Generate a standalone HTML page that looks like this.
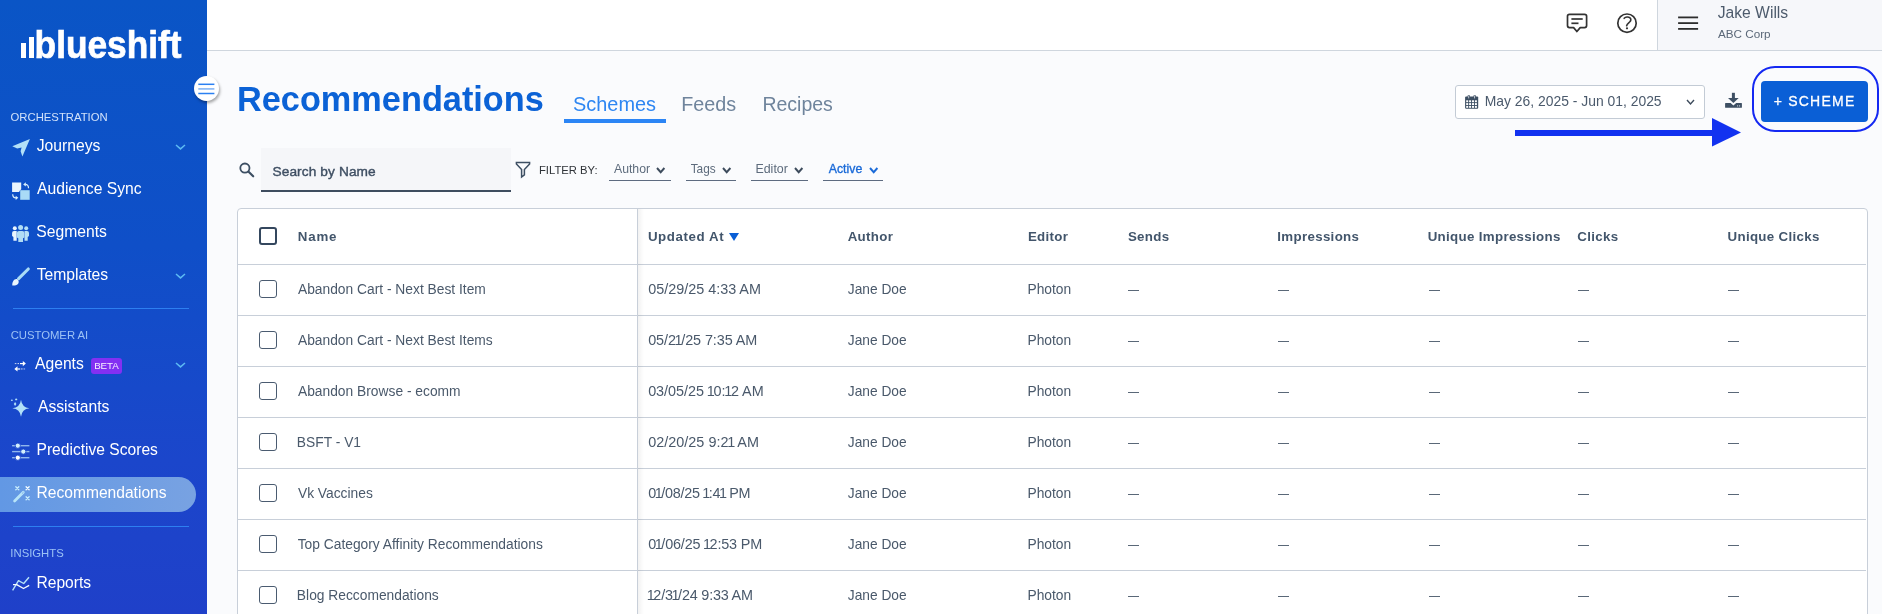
<!DOCTYPE html>
<html><head><meta charset="utf-8"><title>Recommendations</title>
<style>
html,body{margin:0;padding:0;}
body{width:1882px;height:614px;overflow:hidden;position:relative;will-change:transform;background:#fafbfd;font-family:"Liberation Sans",sans-serif;}
.a{position:absolute;}
.t{position:absolute;white-space:nowrap;}
svg{overflow:visible;}
</style></head><body>
<div class="a" style="left:0;top:0;width:207px;height:614px;background:linear-gradient(180deg,#0a55c6 0%,#0f4fc8 40%,#1b46cb 75%,#1f40c9 100%);"></div>
<div class="a" style="left:21px;top:43px;width:5px;height:15px;background:#fff;"></div>
<div class="a" style="left:29px;top:37px;width:5px;height:21px;background:#fff;"></div>
<svg class="a" style="left:34px;top:22px" width="152" height="42"><text x="0.6" y="36" font-family="Liberation Sans" font-weight="700" font-size="38" fill="#fff" stroke="#fff" stroke-width="0.7" textLength="147" lengthAdjust="spacingAndGlyphs">blueshift</text></svg>
<div class="t " style="left:10.56px;top:111.63px;font-size:11.3px;line-height:11.3px;color:#d2e2fa;">ORCHESTRATION</div>
<div class="t " style="left:36.75px;top:138.01px;font-size:15.7px;line-height:15.7px;color:#ffffff;">Journeys</div>
<div class="t " style="left:36.97px;top:180.81px;font-size:15.7px;line-height:15.7px;color:#ffffff;">Audience Sync</div>
<div class="t " style="left:36.29px;top:223.81px;font-size:15.7px;line-height:15.7px;color:#ffffff;">Segments</div>
<div class="t " style="left:36.65px;top:266.81px;font-size:15.7px;line-height:15.7px;color:#ffffff;">Templates</div>
<div class="a" style="left:13px;top:308px;width:176px;height:1px;background:#2d7ff0;"></div>
<div class="t " style="left:10.63px;top:329.83px;font-size:11.3px;line-height:11.3px;color:#9cc2f5;">CUSTOMER AI</div>
<div class="t " style="left:34.97px;top:356.01px;font-size:15.7px;line-height:15.7px;color:#ffffff;">Agents</div>
<div class="a" style="left:91.4px;top:358.1px;width:30.5px;height:15.7px;background:#8330f2;border-radius:3px;"></div>
<div class="t " style="left:94.2px;top:360.90px;font-size:9.8px;line-height:9.8px;color:#f6f0ff;letter-spacing:-0.1px;">BETA</div>
<div class="t " style="left:37.97px;top:399.21px;font-size:15.7px;line-height:15.7px;color:#ffffff;">Assistants</div>
<div class="t " style="left:36.52px;top:442.49px;font-size:15.6px;line-height:15.6px;color:#ffffff;">Predictive Scores</div>
<div class="a" style="left:0;top:477px;width:196px;height:35px;background:linear-gradient(90deg,rgb(98,152,228),rgb(120,162,226));border-radius:0 18px 18px 0;"></div>
<div class="t " style="left:36.52px;top:485.09px;font-size:15.6px;line-height:15.6px;color:#ffffff;">Recommendations</div>
<div class="a" style="left:13px;top:526px;width:176px;height:1px;background:#2d7ff0;"></div>
<div class="t " style="left:10.36px;top:547.83px;font-size:11.3px;line-height:11.3px;color:#9cc2f5;">INSIGHTS</div>
<div class="t " style="left:36.52px;top:574.79px;font-size:15.6px;line-height:15.6px;color:#ffffff;">Reports</div>
<svg class="a" style="left:174.1px;top:143.45000000000002px" width="13" height="7.9"><polyline points="2,2 6.5,5.9 11,2" fill="none" stroke="#5cbaf3" stroke-width="1.5"/></svg>
<svg class="a" style="left:174.1px;top:272.35px" width="13" height="7.9"><polyline points="2,2 6.5,5.9 11,2" fill="none" stroke="#5cbaf3" stroke-width="1.5"/></svg>
<svg class="a" style="left:174.1px;top:361.45px" width="13" height="7.9"><polyline points="2,2 6.5,5.9 11,2" fill="none" stroke="#5cbaf3" stroke-width="1.5"/></svg>
<div class="a" style="left:207px;top:0;width:1675px;height:50px;background:#fff;border-bottom:1px solid #cfd6de;"></div>
<div class="a" style="left:1657px;top:0;width:225px;height:50px;background:#f6f7fa;border-left:1px solid #cfd6de;border-bottom:1px solid #cfd6de;"></div>
<div class="t " style="left:1717.66px;top:4.73px;font-size:15.68px;line-height:15.68px;color:#4d5b6c;">Jake Wills</div>
<div class="t " style="left:1717.98px;top:28.00px;font-size:11.7px;line-height:11.7px;color:#5b6878;">ABC Corp</div>
<div class="t " style="left:237.01px;top:82.17px;font-size:34.3px;line-height:34.3px;color:#0b62d6;font-weight:700;">Recommendations</div>
<div class="t " style="left:573.1px;top:94.65px;font-size:19.9px;line-height:19.9px;color:#2d86f2;">Schemes</div>
<div class="t " style="left:681.28px;top:94.78px;font-size:19.75px;line-height:19.75px;color:#6f849c;">Feeds</div>
<div class="t " style="left:762.4px;top:94.99px;font-size:19.5px;line-height:19.5px;color:#6f849c;">Recipes</div>
<div class="a" style="left:564px;top:119px;width:102px;height:4px;background:#2b85f5;"></div>
<div class="a" style="left:261px;top:148px;width:250px;height:42px;background:#f5f6f9;border-bottom:2px solid #3e4d5f;"></div>
<div class="t " style="left:272.48px;top:164.70px;font-size:13.7px;line-height:13.7px;color:#3f4f63;letter-spacing:0.1px;-webkit-text-stroke:0.4px #3f4f63;">Search by Name</div>
<div class="t " style="left:538.98px;top:164.68px;font-size:11.25px;line-height:11.25px;color:#2f3338;">FILTER BY:</div>
<div class="t " style="left:613.98px;top:162.73px;font-size:12.25px;line-height:12.25px;color:#5d6b7c;">Author</div>
<div class="a" style="left:609px;top:180px;width:62px;height:1px;background:#5d6b80;"></div>
<div class="t " style="left:690.63px;top:163.57px;font-size:11.85px;line-height:11.85px;color:#5d6b7c;">Tags</div>
<div class="a" style="left:686px;top:180px;width:50px;height:1px;background:#5d6b80;"></div>
<div class="t " style="left:755.48px;top:162.60px;font-size:12.4px;line-height:12.4px;color:#5d6b7c;">Editor</div>
<div class="a" style="left:751px;top:180px;width:57px;height:1px;background:#5d6b80;"></div>
<div class="t " style="left:828.78px;top:163.19px;font-size:12.3px;line-height:12.3px;color:#1a6ad8;-webkit-text-stroke:0.35px #1a6ad8;">Active</div>
<div class="a" style="left:823px;top:180px;width:60px;height:1px;background:#5d6b80;"></div>
<div class="a" style="left:1455px;top:85px;width:248px;height:32px;background:#fff;border:1px solid #c3cbd5;border-radius:3px;"></div>
<div class="t " style="left:1484.76px;top:95.33px;font-size:13.9px;line-height:13.9px;color:#4b5a6c;">May 26, 2025 - Jun 01, 2025</div>
<svg class="a" style="left:1685.1px;top:98.3px" width="11" height="8"><polyline points="2,2 5.5,6 9,2" fill="none" stroke="#3d4b5c" stroke-width="1.4"/></svg>
<div class="a" style="left:1761px;top:81px;width:107px;height:41px;background:#0a5fd6;border-radius:4px;"></div>
<div class="t " style="left:1773.72px;top:94.15px;font-size:14px;line-height:14px;color:#ffffff;letter-spacing:1.22px;-webkit-text-stroke:0.3px #fff;">+ SCHEME</div>
<div class="a" style="left:1752.2px;top:65.9px;width:123.2px;height:61.9px;border:2.4px solid #1428f2;border-radius:23px;"></div>
<div class="a" style="left:1514.5px;top:130px;width:200px;height:6px;background:#1232f0;"></div>
<svg class="a" style="left:1712px;top:118px" width="30" height="29"><polygon points="0,0 29,14.5 0,28.5" fill="#1232f0"/></svg>
<div class="a" style="left:237px;top:208px;width:1629px;height:420px;background:#fff;border:1px solid #c8cfd9;border-radius:4px;"></div>
<div class="a" style="left:238px;top:264px;width:1628px;height:1px;background:#c8cfd9;"></div>
<div class="t " style="left:297.81px;top:229.94px;font-size:13.3px;line-height:13.3px;color:#42556b;font-weight:700;letter-spacing:0.8px;">Name</div>
<div class="t " style="left:647.9px;top:229.94px;font-size:13.3px;line-height:13.3px;color:#42556b;font-weight:700;letter-spacing:0.6px;">Updated At</div>
<svg class="a" style="left:729px;top:233px" width="10" height="8"><polygon points="0,0 10,0 5,8" fill="#0a5fd6"/></svg>
<div class="t " style="left:847.67px;top:229.94px;font-size:13.3px;line-height:13.3px;color:#42556b;font-weight:700;letter-spacing:0.33px;">Author</div>
<div class="t " style="left:1027.91px;top:229.94px;font-size:13.3px;line-height:13.3px;color:#42556b;font-weight:700;letter-spacing:0.33px;">Editor</div>
<div class="t " style="left:1127.92px;top:229.94px;font-size:13.3px;line-height:13.3px;color:#42556b;font-weight:700;letter-spacing:0.33px;">Sends</div>
<div class="t " style="left:1277.31px;top:229.94px;font-size:13.3px;line-height:13.3px;color:#42556b;font-weight:700;letter-spacing:0.33px;">Impressions</div>
<div class="t " style="left:1427.7px;top:229.94px;font-size:13.3px;line-height:13.3px;color:#42556b;font-weight:700;letter-spacing:0.33px;">Unique Impressions</div>
<div class="t " style="left:1577.35px;top:229.94px;font-size:13.3px;line-height:13.3px;color:#42556b;font-weight:700;letter-spacing:0.33px;">Clicks</div>
<div class="t " style="left:1727.5px;top:229.94px;font-size:13.3px;line-height:13.3px;color:#42556b;font-weight:700;letter-spacing:0.33px;">Unique Clicks</div>
<div class="a" style="left:259px;top:227px;width:18px;height:18px;box-sizing:border-box;border:2.5px solid #34475e;border-radius:3px;"></div>
<div class="a" style="left:238px;top:315px;width:1628px;height:1px;background:#c8cfd9;"></div>
<div class="a" style="left:259px;top:280px;width:18px;height:18px;box-sizing:border-box;border:1.3px solid #4a5b70;border-radius:3px;"></div>
<div class="t " style="left:297.97px;top:282.92px;font-size:13.8px;line-height:13.8px;color:#4a596b;">Abandon Cart - Next Best Item</div>
<div class="t " style="left:648.14px;top:282.41px;font-size:14.4px;line-height:14.4px;color:#4a596b;">05/29/25 4:33 AM</div>
<div class="t " style="left:847.79px;top:282.96px;font-size:13.75px;line-height:13.75px;color:#4a596b;">Jane Doe</div>
<div class="t " style="left:1027.47px;top:282.92px;font-size:13.8px;line-height:13.8px;color:#4a596b;">Photon</div>
<div class="a" style="left:1128.3px;top:289.8px;width:11px;height:1.3px;background:#5a6878;"></div>
<div class="a" style="left:1278.2px;top:289.8px;width:11px;height:1.3px;background:#5a6878;"></div>
<div class="a" style="left:1428.5px;top:289.8px;width:11px;height:1.3px;background:#5a6878;"></div>
<div class="a" style="left:1577.9px;top:289.8px;width:11px;height:1.3px;background:#5a6878;"></div>
<div class="a" style="left:1728.3px;top:289.8px;width:11px;height:1.3px;background:#5a6878;"></div>
<div class="a" style="left:238px;top:366px;width:1628px;height:1px;background:#c8cfd9;"></div>
<div class="a" style="left:259px;top:331px;width:18px;height:18px;box-sizing:border-box;border:1.3px solid #4a5b70;border-radius:3px;"></div>
<div class="t " style="left:297.97px;top:333.92px;font-size:13.8px;line-height:13.8px;color:#4a596b;">Abandon Cart - Next Best Items</div>
<div class="t " style="left:648.14px;top:333.41px;font-size:14.4px;line-height:14.4px;color:#4a596b;letter-spacing:-0.08px;">05/2<span style="margin:0 -1.25px">1</span>/25 7:35 AM</div>
<div class="t " style="left:847.79px;top:333.96px;font-size:13.75px;line-height:13.75px;color:#4a596b;">Jane Doe</div>
<div class="t " style="left:1027.47px;top:333.92px;font-size:13.8px;line-height:13.8px;color:#4a596b;">Photon</div>
<div class="a" style="left:1128.3px;top:340.8px;width:11px;height:1.3px;background:#5a6878;"></div>
<div class="a" style="left:1278.2px;top:340.8px;width:11px;height:1.3px;background:#5a6878;"></div>
<div class="a" style="left:1428.5px;top:340.8px;width:11px;height:1.3px;background:#5a6878;"></div>
<div class="a" style="left:1577.9px;top:340.8px;width:11px;height:1.3px;background:#5a6878;"></div>
<div class="a" style="left:1728.3px;top:340.8px;width:11px;height:1.3px;background:#5a6878;"></div>
<div class="a" style="left:238px;top:417px;width:1628px;height:1px;background:#c8cfd9;"></div>
<div class="a" style="left:259px;top:382px;width:18px;height:18px;box-sizing:border-box;border:1.3px solid #4a5b70;border-radius:3px;"></div>
<div class="t " style="left:297.97px;top:384.92px;font-size:13.8px;line-height:13.8px;color:#4a596b;">Abandon Browse - ecomm</div>
<div class="t " style="left:648.14px;top:384.41px;font-size:14.4px;line-height:14.4px;color:#4a596b;letter-spacing:-0.02px;">03/05/25 <span style="margin:0 -1.25px">1</span>0:<span style="margin:0 -1.25px">1</span>2 AM</div>
<div class="t " style="left:847.79px;top:384.96px;font-size:13.75px;line-height:13.75px;color:#4a596b;">Jane Doe</div>
<div class="t " style="left:1027.47px;top:384.92px;font-size:13.8px;line-height:13.8px;color:#4a596b;">Photon</div>
<div class="a" style="left:1128.3px;top:391.8px;width:11px;height:1.3px;background:#5a6878;"></div>
<div class="a" style="left:1278.2px;top:391.8px;width:11px;height:1.3px;background:#5a6878;"></div>
<div class="a" style="left:1428.5px;top:391.8px;width:11px;height:1.3px;background:#5a6878;"></div>
<div class="a" style="left:1577.9px;top:391.8px;width:11px;height:1.3px;background:#5a6878;"></div>
<div class="a" style="left:1728.3px;top:391.8px;width:11px;height:1.3px;background:#5a6878;"></div>
<div class="a" style="left:238px;top:468px;width:1628px;height:1px;background:#c8cfd9;"></div>
<div class="a" style="left:259px;top:433px;width:18px;height:18px;box-sizing:border-box;border:1.3px solid #4a5b70;border-radius:3px;"></div>
<div class="t " style="left:296.87px;top:435.92px;font-size:13.8px;line-height:13.8px;color:#4a596b;">BSFT - V1</div>
<div class="t " style="left:648.14px;top:435.41px;font-size:14.4px;line-height:14.4px;color:#4a596b;letter-spacing:0.03px;">02/20/25 9:2<span style="margin:0 -1.25px">1</span> AM</div>
<div class="t " style="left:847.79px;top:435.96px;font-size:13.75px;line-height:13.75px;color:#4a596b;">Jane Doe</div>
<div class="t " style="left:1027.47px;top:435.92px;font-size:13.8px;line-height:13.8px;color:#4a596b;">Photon</div>
<div class="a" style="left:1128.3px;top:442.8px;width:11px;height:1.3px;background:#5a6878;"></div>
<div class="a" style="left:1278.2px;top:442.8px;width:11px;height:1.3px;background:#5a6878;"></div>
<div class="a" style="left:1428.5px;top:442.8px;width:11px;height:1.3px;background:#5a6878;"></div>
<div class="a" style="left:1577.9px;top:442.8px;width:11px;height:1.3px;background:#5a6878;"></div>
<div class="a" style="left:1728.3px;top:442.8px;width:11px;height:1.3px;background:#5a6878;"></div>
<div class="a" style="left:238px;top:519px;width:1628px;height:1px;background:#c8cfd9;"></div>
<div class="a" style="left:259px;top:484px;width:18px;height:18px;box-sizing:border-box;border:1.3px solid #4a5b70;border-radius:3px;"></div>
<div class="t " style="left:297.94px;top:486.92px;font-size:13.8px;line-height:13.8px;color:#4a596b;">Vk Vaccines</div>
<div class="t " style="left:648.14px;top:486.41px;font-size:14.4px;line-height:14.4px;color:#4a596b;letter-spacing:-0.25px;">0<span style="margin:0 -1.25px">1</span>/08/25 <span style="margin:0 -1.25px">1</span>:4<span style="margin:0 -1.25px">1</span> PM</div>
<div class="t " style="left:847.79px;top:486.96px;font-size:13.75px;line-height:13.75px;color:#4a596b;">Jane Doe</div>
<div class="t " style="left:1027.47px;top:486.92px;font-size:13.8px;line-height:13.8px;color:#4a596b;">Photon</div>
<div class="a" style="left:1128.3px;top:493.8px;width:11px;height:1.3px;background:#5a6878;"></div>
<div class="a" style="left:1278.2px;top:493.8px;width:11px;height:1.3px;background:#5a6878;"></div>
<div class="a" style="left:1428.5px;top:493.8px;width:11px;height:1.3px;background:#5a6878;"></div>
<div class="a" style="left:1577.9px;top:493.8px;width:11px;height:1.3px;background:#5a6878;"></div>
<div class="a" style="left:1728.3px;top:493.8px;width:11px;height:1.3px;background:#5a6878;"></div>
<div class="a" style="left:238px;top:570px;width:1628px;height:1px;background:#c8cfd9;"></div>
<div class="a" style="left:259px;top:535px;width:18px;height:18px;box-sizing:border-box;border:1.3px solid #4a5b70;border-radius:3px;"></div>
<div class="t " style="left:297.69px;top:537.92px;font-size:13.8px;line-height:13.8px;color:#4a596b;">Top Category Affinity Recommendations</div>
<div class="t " style="left:648.14px;top:537.41px;font-size:14.4px;line-height:14.4px;color:#4a596b;letter-spacing:-0.16px;">0<span style="margin:0 -1.25px">1</span>/06/25 <span style="margin:0 -1.25px">1</span>2:53 PM</div>
<div class="t " style="left:847.79px;top:537.96px;font-size:13.75px;line-height:13.75px;color:#4a596b;">Jane Doe</div>
<div class="t " style="left:1027.47px;top:537.92px;font-size:13.8px;line-height:13.8px;color:#4a596b;">Photon</div>
<div class="a" style="left:1128.3px;top:544.8px;width:11px;height:1.3px;background:#5a6878;"></div>
<div class="a" style="left:1278.2px;top:544.8px;width:11px;height:1.3px;background:#5a6878;"></div>
<div class="a" style="left:1428.5px;top:544.8px;width:11px;height:1.3px;background:#5a6878;"></div>
<div class="a" style="left:1577.9px;top:544.8px;width:11px;height:1.3px;background:#5a6878;"></div>
<div class="a" style="left:1728.3px;top:544.8px;width:11px;height:1.3px;background:#5a6878;"></div>
<div class="a" style="left:238px;top:621px;width:1628px;height:1px;background:#c8cfd9;"></div>
<div class="a" style="left:259px;top:586px;width:18px;height:18px;box-sizing:border-box;border:1.3px solid #4a5b70;border-radius:3px;"></div>
<div class="t " style="left:296.87px;top:588.92px;font-size:13.8px;line-height:13.8px;color:#4a596b;">Blog Reccomendations</div>
<div class="t " style="left:647.99px;top:588.41px;font-size:14.4px;line-height:14.4px;color:#4a596b;letter-spacing:-0.19px;"><span style="margin:0 -1.25px">1</span>2/3<span style="margin:0 -1.25px">1</span>/24 9:33 AM</div>
<div class="t " style="left:847.79px;top:588.96px;font-size:13.75px;line-height:13.75px;color:#4a596b;">Jane Doe</div>
<div class="t " style="left:1027.47px;top:588.92px;font-size:13.8px;line-height:13.8px;color:#4a596b;">Photon</div>
<div class="a" style="left:1128.3px;top:595.8px;width:11px;height:1.3px;background:#5a6878;"></div>
<div class="a" style="left:1278.2px;top:595.8px;width:11px;height:1.3px;background:#5a6878;"></div>
<div class="a" style="left:1428.5px;top:595.8px;width:11px;height:1.3px;background:#5a6878;"></div>
<div class="a" style="left:1577.9px;top:595.8px;width:11px;height:1.3px;background:#5a6878;"></div>
<div class="a" style="left:1728.3px;top:595.8px;width:11px;height:1.3px;background:#5a6878;"></div>
<div class="a" style="left:637px;top:209px;width:1px;height:420px;background:#c8cfd9;"></div>
<div class="a" style="left:638px;top:209px;width:6px;height:420px;background:linear-gradient(90deg,rgba(0,0,0,0.05),rgba(0,0,0,0));"></div>
<svg class="a" style="left:8px;top:134px" width="28" height="28" viewBox="8 134 28 28"><polygon points="29.9,139 12.3,146.2 17.2,148.6 21.6,147.6 20.6,151.2 22.4,156.6" fill="#b2e0f8"/></svg>
<svg class="a" style="left:8px;top:177px" width="28" height="28" viewBox="8 177 28 28"><path d="M12.1,182.5 L21.2,182.5 L21.2,189.2 L19.3,191.3 L19.3,192 L12.1,192 Z" fill="#eaf5fd"/><rect x="20.2" y="190.2" width="9.5" height="9.6" fill="#a9dbf6"/><path d="M28.5,188.3 C28.6,185.6 27.4,184.4 25.2,184.4" fill="none" stroke="#d8eefb" stroke-width="1.2"/><polygon points="23.2,184.4 25.8,182.3 25.8,186.5" fill="#d8eefb"/><path d="M12.7,194.2 C12.7,196.9 14,197.8 16,197.8" fill="none" stroke="#d8eefb" stroke-width="1.2"/><polygon points="18.3,197.8 15.7,195.7 15.7,199.9" fill="#d8eefb"/></svg>
<svg class="a" style="left:8px;top:220px" width="28" height="28" viewBox="8 220 28 28"><circle cx="14.8" cy="228.2" r="2" fill="#eaf5fd"/><circle cx="26.2" cy="228.2" r="2" fill="#b7e0f7"/><path d="M12.1,233 Q12.1,231 14,231 L16.7,231 L16.7,240.7 L13.4,240.7 L13.4,237 L12.1,236 Z" fill="#eaf5fd"/><path d="M24.5,231 L27,231 Q29,231 29,233 L29,236 L27.7,237 L27.7,240.7 L24.5,240.7 Z" fill="#b7e0f7"/><circle cx="20.6" cy="227.4" r="2.5" fill="#b0dcf5"/><path d="M16.9,233 Q16.9,231 19,231 L22.3,231 Q24.4,231 24.4,233 L24.4,237.5 L23,238.3 L23,242 L18.3,242 L18.3,238.3 L16.9,237.5 Z" fill="#b0dcf5"/></svg>
<svg class="a" style="left:8px;top:263px" width="28" height="28" viewBox="8 263 28 28"><line x1="28.3" y1="269" x2="18.6" y2="278.6" stroke="#a9dcf6" stroke-width="3.1" stroke-linecap="round"/><path d="M17.5,279.5 C19.5,281 19,284 16.5,285 C15,285.6 13,285.6 12.3,285.4 C12.2,284 12.5,282.2 13.3,281 C14.5,279.3 16.3,278.6 17.5,279.5 Z" fill="#eaf5fd"/></svg>
<svg class="a" style="left:8px;top:352px" width="28" height="28" viewBox="8 352 28 28"><g fill="#fff"><rect x="14.8" y="363" width="1.6" height="1.1" opacity=".7"/><rect x="17.6" y="363" width="1.3" height="1.1" opacity=".85"/><rect x="20" y="363" width="3.5" height="1.2"/><polygon points="22.8,361 25.9,363.6 22.8,366.2"/><rect x="17.2" y="368.4" width="3" height="1.2"/><polygon points="17.5,366.3 14.3,369 17.5,371.6"/><rect x="21.2" y="368.4" width="1.3" height="1.1" opacity=".85"/><rect x="23.5" y="368.4" width="1.6" height="1.1" opacity=".6"/></g></svg>
<svg class="a" style="left:8px;top:393px" width="28" height="28" viewBox="8 393 28 28"><path d="M21,399.8 Q21.9,407.4 29.4,408.3 Q21.9,409.2 21,416.7 Q20.1,409.2 12.3,408.3 Q20.1,407.4 21,399.8 Z" fill="#b2e0f8"/><path d="M15.1,402 L16.4,404 L15.1,406 L13.8,404 Z" fill="#b2e0f8"/><ellipse cx="16.2" cy="399.4" rx="1.1" ry=".9" fill="#b2e0f8"/><ellipse cx="11.9" cy="400.3" rx="1" ry=".7" fill="#b2e0f8"/></svg>
<svg class="a" style="left:8px;top:437px" width="28" height="28" viewBox="8 437 28 28"><g stroke="#b9dcf7" stroke-width="1.4" opacity=".75"><line x1="12.1" y1="445.7" x2="29.4" y2="445.7"/><line x1="12.1" y1="451.6" x2="29.4" y2="451.6"/><line x1="12.1" y1="457.7" x2="29.4" y2="457.7"/></g><g fill="#d3effc" stroke="#1a47cb" stroke-width=".9"><circle cx="17.8" cy="445.7" r="2.6"/><circle cx="23.3" cy="451.6" r="2.6"/><circle cx="17.8" cy="457.7" r="2.6" fill="#fff"/></g></svg>
<svg class="a" style="left:8px;top:480px" width="28" height="28" viewBox="8 480 28 28"><line x1="23.3" y1="492.3" x2="14.6" y2="501" stroke="#b8e4f8" stroke-width="2.8" stroke-linecap="round"/><line x1="23.6" y1="492" x2="21.9" y2="493.7" stroke="#7fb0ea" stroke-width="1"/><g stroke="#c8ecfb" stroke-width="1.3" stroke-linecap="round"><path d="M15.8,486.7 L18.8,489.7 M18.8,486.7 L15.8,489.7"/><path d="M26.1,486.7 L29.1,489.7 M29.1,486.7 L26.1,489.7" stroke="#f2fbff"/><path d="M26.1,496.7 L29.1,499.7 M29.1,496.7 L26.1,499.7"/></g></svg>
<svg class="a" style="left:8px;top:570px" width="28" height="28" viewBox="8 570 28 28"><polyline points="12.6,590.3 18.5,580.7 23.7,583.5 29,577.3" fill="none" stroke="#b7e3f8" stroke-width="1.4" stroke-linejoin="round"/><polyline points="13,584.6 16.7,584.6 23.5,588.5 29.2,585.3" fill="none" stroke="#f4fbff" stroke-width="1.4" stroke-linejoin="round"/></svg>
<div class="a" style="left:194px;top:76px;width:25px;height:25px;border-radius:50%;background:#fff;box-shadow:1px 2px 3px rgba(0,0,0,0.35);"></div>
<svg class="a" style="left:190px;top:72px" width="36" height="34" viewBox="190 72 36 34"><line x1="198.3" y1="84.3" x2="214.4" y2="84.3" stroke="#2b80f2" stroke-width="1.5"/><line x1="198.3" y1="88.9" x2="214.4" y2="88.9" stroke="#8dbaf5" stroke-width="1.7"/><line x1="198.3" y1="93.5" x2="214.4" y2="93.5" stroke="#2b80f2" stroke-width="1.5"/></svg>
<svg class="a" style="left:1560px;top:6px" width="84" height="34" viewBox="1560 6 84 34"><path d="M1569.5,14.3 L1584.6,14.3 Q1586.6,14.3 1586.6,16.3 L1586.6,25.6 Q1586.6,27.6 1584.6,27.6 L1580.2,27.6 L1576.9,31.5 L1573.6,27.6 L1569.5,27.6 Q1567.5,27.6 1567.5,25.6 L1567.5,16.3 Q1567.5,14.3 1569.5,14.3 Z" fill="none" stroke="#333" stroke-width="1.7" stroke-linejoin="round"/><line x1="1571.4" y1="19" x2="1582.7" y2="19" stroke="#333" stroke-width="1.7"/><line x1="1571.4" y1="23.3" x2="1578.5" y2="23.3" stroke="#333" stroke-width="1.7"/><circle cx="1627" cy="23.2" r="9.2" fill="none" stroke="#333" stroke-width="1.7"/><path d="M1624.2,18.3 C1625.5,16.9 1628.4,16.6 1630,17.8 C1631.4,19 1631,20.8 1629.6,22 C1628,23.4 1626.8,24.2 1626.6,25.8" fill="none" stroke="#333" stroke-width="1.6" stroke-linecap="round"/><circle cx="1627" cy="28.3" r="1.1" fill="#333"/></svg>
<svg class="a" style="left:1670px;top:8px" width="40" height="30" viewBox="1670 8 40 30"><g stroke="#2d2d2d" stroke-width="1.8"><line x1="1678.1" y1="17.4" x2="1698.1" y2="17.4"/><line x1="1678.1" y1="23.1" x2="1698.1" y2="23.1"/><line x1="1678.1" y1="28.9" x2="1698.1" y2="28.9"/></g></svg>
<svg class="a" style="left:234px;top:156px" width="28" height="28" viewBox="234 156 28 28"><circle cx="244.9" cy="168.1" r="4.6" fill="none" stroke="#3d4f63" stroke-width="1.8"/><line x1="248.6" y1="171.8" x2="253.2" y2="176.3" stroke="#3d4f63" stroke-width="2.2" stroke-linecap="round"/></svg>
<svg class="a" style="left:510px;top:156px" width="28" height="28" viewBox="510 156 28 28"><path d="M516.4,162.6 L529.6,162.6 L529.6,164 L524.4,169.6 L524.4,174.8 L521.6,177 L521.6,169.6 L516.4,164 Z" fill="none" stroke="#3d4f63" stroke-width="1.5" stroke-linejoin="miter"/></svg>
<svg class="a" style="left:654.9px;top:166.0px" width="11.4" height="8.2"><polyline points="2,2 5.7,6.2 9.4,2" fill="none" stroke="#3d4b5c" stroke-width="1.9"/></svg>
<svg class="a" style="left:720.5px;top:166.0px" width="11.4" height="8.2"><polyline points="2,2 5.7,6.2 9.4,2" fill="none" stroke="#3d4b5c" stroke-width="1.9"/></svg>
<svg class="a" style="left:792.5px;top:166.0px" width="11.4" height="8.2"><polyline points="2,2 5.7,6.2 9.4,2" fill="none" stroke="#3d4b5c" stroke-width="1.9"/></svg>
<svg class="a" style="left:867.6999999999999px;top:166.0px" width="11.4" height="8.2"><polyline points="2,2 5.7,6.2 9.4,2" fill="none" stroke="#1a6ad8" stroke-width="1.9"/></svg>
<svg class="a" style="left:1460px;top:88px" width="40" height="26" viewBox="1460 88 40 26"><rect x="1465.1" y="96.4" width="13.1" height="12.4" rx="1" fill="#3d4f63"/><rect x="1466.2" y="100.3" width="2" height="1.9" fill="#fff"/><rect x="1469.1" y="100.3" width="2" height="1.9" fill="#fff"/><rect x="1472.0" y="100.3" width="2" height="1.9" fill="#fff"/><rect x="1474.9" y="100.3" width="2" height="1.9" fill="#fff"/><rect x="1466.2" y="103.1" width="2" height="1.9" fill="#fff"/><rect x="1469.1" y="103.1" width="2" height="1.9" fill="#fff"/><rect x="1472.0" y="103.1" width="2" height="1.9" fill="#fff"/><rect x="1474.9" y="103.1" width="2" height="1.9" fill="#fff"/><rect x="1466.2" y="105.9" width="2" height="1.9" fill="#fff"/><rect x="1469.1" y="105.9" width="2" height="1.9" fill="#fff"/><rect x="1472.0" y="105.9" width="2" height="1.9" fill="#fff"/><rect x="1474.9" y="105.9" width="2" height="1.9" fill="#fff"/><rect x="1467.6" y="94.9" width="2.3" height="4.2" rx="1" fill="#3d4f63"/><rect x="1468.35" y="95.5" width="0.8" height="2.9" fill="#dfe4ea"/><rect x="1473.5" y="94.9" width="2.3" height="4.2" rx="1" fill="#3d4f63"/><rect x="1474.25" y="95.5" width="0.8" height="2.9" fill="#dfe4ea"/></svg>
<svg class="a" style="left:1718px;top:86px" width="32" height="28" viewBox="1718 86 32 28"><rect x="1731.9" y="92.8" width="3" height="6" fill="#3d4f63"/><polygon points="1728,98.1 1738.7,98.1 1733.4,103" fill="#3d4f63"/><path d="M1725.6,103.1 L1730.6,103.1 L1733.4,105.6 L1736.2,103.1 L1741.4,103.1 Q1741.9,103.1 1741.9,103.6 L1741.9,107.2 Q1741.9,107.7 1741.4,107.7 L1725.6,107.7 Q1725.1,107.7 1725.1,107.2 L1725.1,103.6 Q1725.1,103.1 1725.6,103.1 Z" fill="#3d4f63"/><rect x="1737.1" y="105.3" width="1" height="1.2" fill="#c9d1da"/><rect x="1739.1" y="105.3" width="1" height="1.2" fill="#c9d1da"/></svg>
</body></html>
